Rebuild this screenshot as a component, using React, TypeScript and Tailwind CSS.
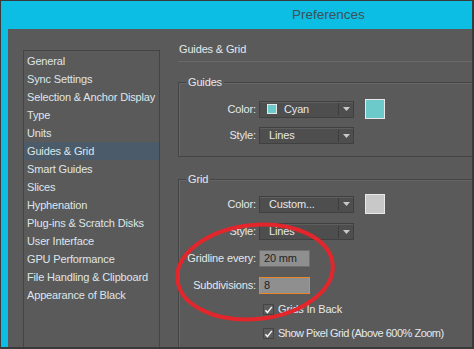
import React from 'react';

const sections = [
  'General',
  'Sync Settings',
  'Selection & Anchor Display',
  'Type',
  'Units',
  'Guides & Grid',
  'Smart Guides',
  'Slices',
  'Hyphenation',
  'Plug-ins & Scratch Disks',
  'User Interface',
  'GPU Performance',
  'File Handling & Clipboard',
  'Appearance of Black',
];

function Dropdown({ text, swatch }: { text: string; swatch?: string }) {
  return (
    <div className="w-[95px] h-[17px] flex items-center bg-[#4e4e4e] border border-[#404040] shadow-[inset_0_1px_0_#5e5e5e]">
      {swatch && <span className="ml-[7px] w-[10px] h-[10px] border border-[#e6e6e6]" style={{ background: swatch }} />}
      <span className={`flex-1 ${swatch ? 'ml-[7px]' : 'ml-[9px]'} text-[#e4e9ec]`}>{text}</span>
      <span className="w-px h-[12px] bg-[#3c3c3c]" />
      <span className="w-[14px] flex justify-center">
        <svg width="7" height="4" viewBox="0 0 7 4">
          <path d="M0 0h7L3.5 4z" fill="#c9c9c9" />
        </svg>
      </span>
    </div>
  );
}

function Row({ label, children, className = '' }: { label: string; children: React.ReactNode; className?: string }) {
  return (
    <div className={`flex items-center ${className}`}>
      <span className="w-[80px] pr-[3px] text-right whitespace-nowrap text-[#e4e9ec]">{label}</span>
      {children}
    </div>
  );
}

function Check({ label, tight }: { label: string; tight?: boolean }) {
  return (
    <div className="flex items-center ml-[84px]">
      <span className="w-[11px] h-[11px] bg-[#5c5c5c] border border-[#444] flex items-center justify-center">
        <svg width="10" height="10" viewBox="0 0 10 10">
          <path d="M1.5 5.2l2.3 2.6L8.8 1.5" stroke="#f2f2f2" strokeWidth="1.6" fill="none" />
        </svg>
      </span>
      <span className={`ml-[4px] whitespace-nowrap text-[#e4e9ec] ${tight ? 'tracking-[-0.5px]' : ''}`}>{label}</span>
    </div>
  );
}

export default function App() {
  return (
    <div
      className="w-[474px] h-[349px] overflow-hidden bg-[#0cbde4] border-t border-l border-[#3a3a3a] border-r-2 border-b-2 flex flex-col text-[11px] leading-none tracking-[-0.15px]"
      style={{ fontFamily: '"Liberation Sans", Arial, sans-serif' }}
    >
      <div className="h-[28px] shrink-0 flex items-center pl-[291px] text-[13.5px] tracking-normal text-[#3e5058]">Preferences</div>
      <div className="flex-1 ml-[7px] bg-[#5a5a5a] flex relative">
        <div className="ml-[15px] mt-[21px] w-[137px] shrink-0 border-l border-t border-r border-[#444444] pt-[1px]">
          {sections.map((s) => (
            <div
              key={s}
              className={`h-[18px] flex items-center pl-[3px] whitespace-nowrap text-[#dfe6ea] ${s === 'Guides & Grid' ? 'bg-[#4b5b69]' : ''}`}
            >
              {s}
            </div>
          ))}
        </div>
        <div className="flex-1 ml-[18px] flex flex-col">
          <div className="h-[33px] flex items-end pb-[6px] pl-[1px] border-b border-[#6a6a6a] text-[#e4e9ec]">Guides &amp; Grid</div>
          <div className="mt-[20px] h-[75px] border-l border-t border-b border-[#444444] shadow-[inset_1px_1px_0_#666] relative">
            <span className="absolute -top-[6px] left-[7px] px-[2px] bg-[#5a5a5a] text-[#e4e9ec]">Guides</span>
            <Row label="Color:" className="mt-[16px]">
              <Dropdown text="Cyan" swatch="#6ccaca" />
              <span className="ml-[11px] w-[20px] h-[20px] bg-[#6ccaca] border border-[#e8e8e8]" />
            </Row>
            <Row label="Style:" className="mt-[8px]">
              <Dropdown text="Lines" />
            </Row>
          </div>
          <div className="mt-[22px] flex-1 border-l border-t border-[#444444] shadow-[inset_1px_1px_0_#666] relative">
            <span className="absolute -top-[6px] left-[7px] px-[2px] bg-[#5a5a5a] text-[#e4e9ec]">Grid</span>
            <Row label="Color:" className="mt-[14px]">
              <Dropdown text="Custom..." />
              <span className="ml-[11px] w-[20px] h-[20px] bg-[#c8c8c8] border border-[#e8e8e8]" />
            </Row>
            <Row label="Style:" className="mt-[9px]">
              <Dropdown text="Lines" />
            </Row>
            <Row label="Gridline every:" className="mt-[10px]">
              <span className="w-[51px] h-[17px] flex items-center pl-[4px] bg-[#8f8f8f] border border-[#6f6f6f] text-[#1f1f1f]">20 mm</span>
            </Row>
            <Row label="Subdivisions:" className="mt-[10px]">
              <span className="w-[51px] h-[17px] flex items-center pl-[4px] bg-[#8f8f8f] border border-[#e8872a] text-[#1f1f1f]">8</span>
            </Row>
            <div className="mt-[10px]">
              <Check label="Grids In Back" />
            </div>
            <div className="mt-[13px]">
              <Check label="Show Pixel Grid (Above 600% Zoom)" tight />
            </div>
          </div>
        </div>
        <svg className="absolute left-[165px] top-[191px] pointer-events-none" width="164" height="104" viewBox="0 0 164 104">
          <ellipse cx="82" cy="52" rx="78" ry="47" transform="rotate(-6 82 52)" fill="none" stroke="#e3262b" strokeWidth="4" />
        </svg>
      </div>
    </div>
  );
}
